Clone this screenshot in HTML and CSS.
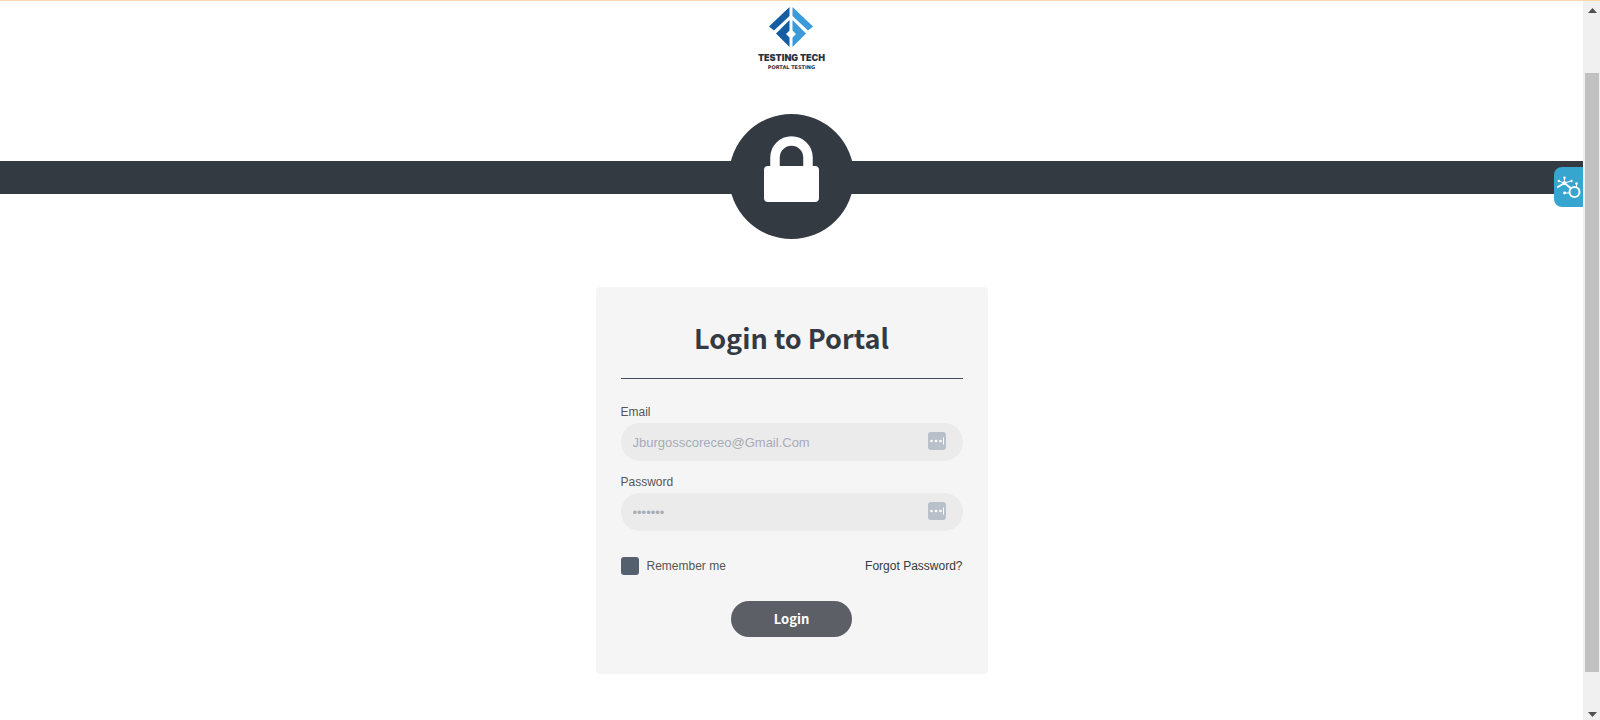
FILE: index.html
```html
<!DOCTYPE html>
<html lang="en">
<head>
<meta charset="utf-8">
<title>Login to Portal</title>
<link rel="stylesheet" href="styles.css">
</head>
<body>
<div class="page">
  <header class="brand">
    <svg class="brand-mark" viewBox="0 0 44 40" aria-hidden="true">
      <path fill="#145da2" d="M20.500 0V9L5 23.500L0 19.500ZM20.500 13V23.500L17 27L20.500 30.500V40L7 26.500Z"/>
      <path fill="#3b9ad9" d="M23.500 0V9L39 23.500L44 19.500ZM23.500 13V23.500L27 27L23.500 30.500V40L37 26.500Z"/>
    </svg>
    <span class="brand-name">TESTING TECH</span>
    <span class="brand-tagline">PORTAL TESTING</span>
  </header>

  <div class="banner">
    <div class="banner-circle">
      <svg class="lock" viewBox="0 0 55 66" aria-hidden="true">
        <path fill="none" stroke="#fff" stroke-width="9.500" d="M11 33V21.500a16.500 16.500 0 0 1 33 0V33"/>
        <rect y="30" width="55" height="36" rx="4" fill="#fff"/>
      </svg>
    </div>
  </div>

  <main class="card">
    <h1 class="title">Login to Portal</h1>
    <form class="form">
      <label class="label" for="email">Email</label>
      <div class="field">
        <input class="input" id="email" type="text" placeholder="Jburgosscoreceo@Gmail.Com">
        <svg class="manager" viewBox="0 0 18 18" aria-hidden="true"><rect width="18" height="18" rx="3" fill="#b9c0ca"/><g fill="#fff"><circle cx="3.500" cy="9" r="1.300"/><circle cx="8" cy="9" r="1.300"/><circle cx="12.500" cy="9" r="1.300"/><rect x="15" y="5.500" width="1" height="7"/></g></svg>
      </div>
      <label class="label" for="password">Password</label>
      <div class="field">
        <input class="input" id="password" type="text" placeholder="•••••••">
        <svg class="manager" viewBox="0 0 18 18" aria-hidden="true"><rect width="18" height="18" rx="3" fill="#b9c0ca"/><g fill="#fff"><circle cx="3.500" cy="9" r="1.300"/><circle cx="8" cy="9" r="1.300"/><circle cx="12.500" cy="9" r="1.300"/><rect x="15" y="5.500" width="1" height="7"/></g></svg>
      </div>
      <div class="options">
        <label class="remember" for="remember"><input class="check" id="remember" type="checkbox">Remember me</label>
        <a class="forgot" href="#">Forgot Password?</a>
      </div>
      <button class="submit" type="submit">Login</button>
    </form>
  </main>
</div>

<button class="widget" type="button" aria-label="Open assistant">
  <svg class="widget-icon" viewBox="0 0 24 24" aria-hidden="true">
    <g fill="none" stroke="#fff">
      <circle cx="17.500" cy="17" r="5" stroke-width="2"/>
      <path stroke-width="1.800" d="M0 12.500L7.500 8L14 13.500"/>
      <path stroke-width="1" d="M7.500 8V2.500M7.500 8L1.500 6M7.500 8L14.500 6M19.500 12V8.500M12 18H7.500"/>
    </g>
    <g fill="#fff"><circle cx="7.500" cy="8" r="2"/><circle cx="7.500" cy="2.800" r="1.300"/><circle cx="1.800" cy="6" r="1.200"/><circle cx="14.500" cy="6" r="1.200"/><circle cx="19.500" cy="8.500" r="1.300"/><circle cx="7.500" cy="18" r="1.400"/></g>
  </svg>
</button>

<div class="scrollbar" aria-hidden="true">
  <svg class="arrow" viewBox="0 0 9 5"><path fill="#505050" d="M4.500 0L9 5H0Z"/></svg>
  <div class="thumb"></div>
  <svg class="arrow" viewBox="0 0 9 5"><path fill="#505050" d="M4.500 5L9 0H0Z"/></svg>
</div>
</body>
</html>
```
FILE: styles.css
```css
* { box-sizing: border-box; }

body {
  margin: 0;
  background: #fff;
  border-top: 1px solid #ffd9a8;
  font-family: "Liberation Sans", Arial, sans-serif;
  font-size: 12px;
  color: #555;
}

.page {
  display: flex;
  flex-direction: column;
  align-items: center;
  margin-right: 17px;
  padding: 6px 0 45px;
}

.brand {
  display: flex;
  flex-direction: column;
  align-items: center;
  color: #2c2f3e;
  font-family: Inter, sans-serif;
}

.brand-mark { width: 44px; height: 40px; }

.brand-name {
  margin-top: 4px;
  font-size: 9px;
  line-height: 13px;
  font-weight: 900;
}

.brand-tagline {
  font-family: "DejaVu Sans", sans-serif;
  font-size: 5px;
  line-height: 6px;
  font-weight: 700;
}

.banner {
  display: flex;
  justify-content: center;
  align-self: stretch;
  margin-top: 44px;
  background: linear-gradient(#343a42, #343a42) 0 47px / 100% 33px no-repeat;
}

.banner-circle {
  display: flex;
  justify-content: center;
  width: 125px;
  height: 125px;
  padding-top: 22px;
  border-radius: 50%;
  background: #343a42;
}

.lock { width: 55px; height: 66px; }

.card {
  width: 392px;
  max-width: 100%;
  margin-top: 48px;
  padding: 25px 25px 37px;
  border-radius: 4px;
  background: #f5f5f5;
}

.title {
  margin: 0 0 24px;
  padding-bottom: 14px;
  border-bottom: 1px solid #474d56;
  color: #343a42;
  font-family: "Noto Sans CJK SC", sans-serif;
  font-size: 27px;
  line-height: 52px;
  font-weight: 700;
  text-align: center;
}

.form { display: flex; flex-direction: column; }

.label { padding-bottom: 2px; line-height: 18px; }

.field { position: relative; margin-bottom: 12px; }

.input {
  display: block;
  width: 100%;
  height: 38px;
  padding: 0 48px 0 12px;
  border: 0;
  border-radius: 19px;
  background: #ebebeb;
  color: #a5adb7;
  font: 13px "Liberation Sans", Arial, sans-serif;
}

.input::placeholder { color: #a5adb7; opacity: 1; }

.manager {
  position: absolute;
  top: 9px;
  right: 17px;
  width: 18px;
  height: 18px;
}

.options {
  display: flex;
  justify-content: space-between;
  align-items: center;
  margin: 14px 0 26px;
}

.remember { display: flex; align-items: center; gap: 8px; }

.check {
  appearance: none;
  width: 18px;
  height: 18px;
  margin: 0;
  border-radius: 3px;
  background: #55606e;
}

.forgot { color: #343a42; text-decoration: none; }

.submit {
  align-self: center;
  width: 121px;
  height: 36px;
  padding: 0 0 2px;
  border: 0;
  border-radius: 18px;
  background: #5c5f66;
  color: #fff;
  font: 700 13px "Noto Sans CJK SC", sans-serif;
}

.widget {
  position: fixed;
  top: 167px;
  right: 17px;
  display: flex;
  align-items: center;
  justify-content: center;
  width: 29px;
  height: 40px;
  padding: 0;
  border: 0;
  border-radius: 8px 0 0 8px;
  background: #36a6d0;
}

.widget-icon { width: 24px; height: 24px; }

.scrollbar {
  position: fixed;
  top: 1px;
  right: 0;
  bottom: 0;
  display: flex;
  flex-direction: column;
  align-items: center;
  width: 17px;
  padding: 7px 1px 3px 2px;
  background: #f0f0f0;
}

.arrow { width: 9px; height: 5px; }

.thumb {
  flex: 1;
  align-self: stretch;
  margin: 60px 0 40px;
  background: #c1c1c1;
}
```
